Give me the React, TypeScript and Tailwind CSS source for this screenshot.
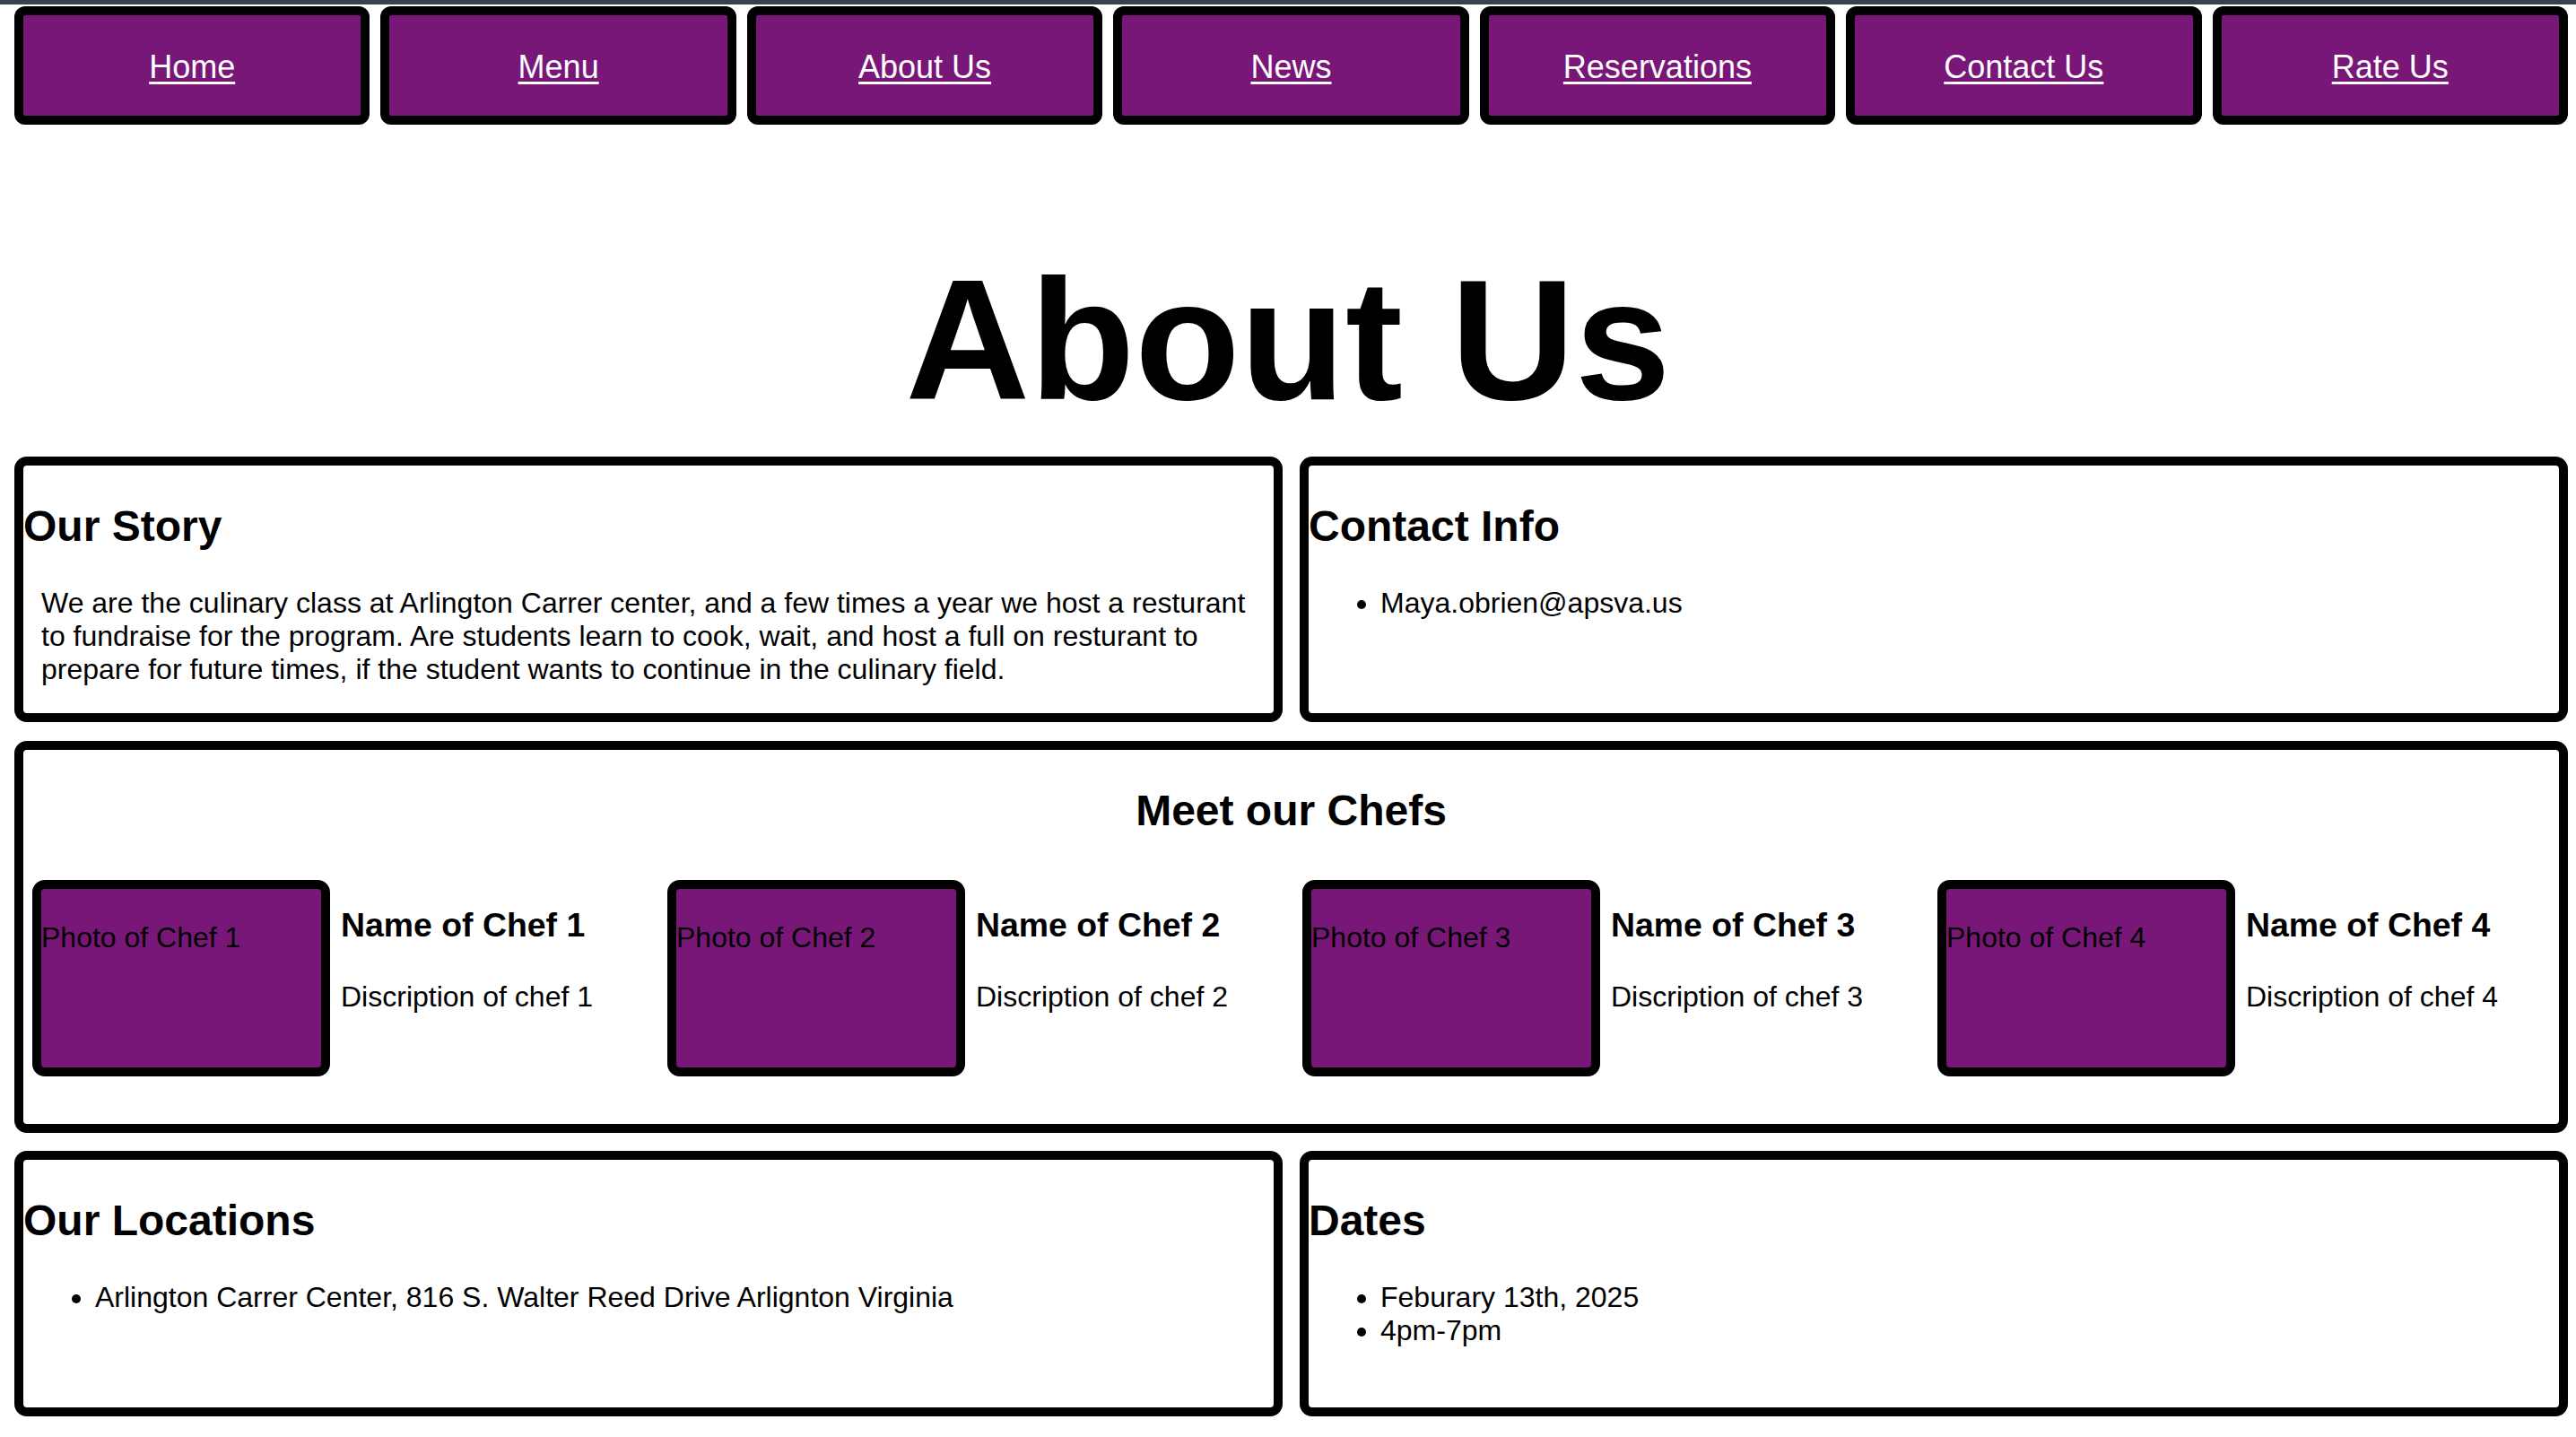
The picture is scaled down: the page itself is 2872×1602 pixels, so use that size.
const navItems = ["Home", "Menu", "About Us", "News", "Reservations", "Contact Us", "Rate Us"];

const chefs = [1, 2, 3, 4];

function Box({ title, children, className = "" }: { title: string; children: React.ReactNode; className?: string }) {
  return (
    <div className={`flex-1 border-[10px] border-black rounded-[14px] overflow-hidden ${className}`}>
      <h2 className="text-[48px] font-bold leading-[1.15] my-[40px]">{title}</h2>
      {children}
    </div>
  );
}

function ChefCard({ n }: { n: number }) {
  return (
    <div className="flex w-[708px] shrink-0 items-start">
      <div className="ml-[10px] mt-[10px] mr-[12px] w-[332px] h-[219px] shrink-0 border-[10px] border-black rounded-[14px] bg-[#781778]">
        <p className="mt-[36px] text-[32px] leading-[1.15] text-black">Photo of Chef {n}</p>
      </div>
      <div>
        <h3 className="text-[37.4px] font-bold leading-[1.15] mt-[39px] mb-[40px]">Name of Chef {n}</h3>
        <p className="text-[32px] leading-[1.15]">Discription of chef {n}</p>
      </div>
    </div>
  );
}

export default function App() {
  return (
    <div className="min-h-[1602px] bg-white text-black" style={{ fontFamily: '"Liberation Sans", Arial, Helvetica, sans-serif' }}>
      <div className="h-[5px] bg-[#394150]" />
      <nav className="mt-[2px] flex gap-[12px] pl-[16px] pr-[9px]">
        {navItems.map((item) => (
          <a
            key={item}
            href="#"
            className="flex-1 h-[132px] pt-[4px] flex items-center justify-center border-[10px] border-black rounded-[12px] bg-[#781778] text-white text-[36px] leading-[1.15] underline underline-offset-[4px] decoration-[3px]"
          >
            {item}
          </a>
        ))}
      </nav>

      <h1 className="text-center text-[192px] font-bold leading-[1.15] mt-[130px] mb-[19px]">About Us</h1>

      <div className="pl-[16px] pr-[9px]">
        <div className="flex gap-[19px] h-[296px]">
          <Box title="Our Story">
            <p className="mx-[20px] my-[32px] text-[32px] leading-[1.15]">
              We are the culinary class at Arlington Carrer center, and a few times a year we host a resturant to fundraise for the program. Are students learn to cook, wait, and host a full on resturant to prepare for future times, if the student wants to continue in the culinary field.
            </p>
          </Box>
          <Box title="Contact Info">
            <ul className="list-disc pl-[80px] my-[32px] text-[32px] leading-[1.15]">
              <li>Maya.obrien@apsva.us</li>
            </ul>
          </Box>
        </div>

        <div className="mt-[21px] h-[437px] border-[10px] border-black rounded-[14px] overflow-hidden">
          <h2 className="text-center text-[48px] font-bold leading-[1.15] my-[40px]">Meet our Chefs</h2>
          <div className="flex">
            {chefs.map((n) => (
              <ChefCard key={n} n={n} />
            ))}
          </div>
        </div>

        <div className="mt-[20px] flex gap-[19px] h-[296px]">
          <Box title="Our Locations">
            <ul className="list-disc pl-[80px] my-[32px] text-[32px] leading-[1.15]">
              <li>Arlington Carrer Center, 816 S. Walter Reed Drive Arlignton Virginia</li>
            </ul>
          </Box>
          <Box title="Dates">
            <ul className="list-disc pl-[80px] my-[32px] text-[32px] leading-[1.15]">
              <li>Feburary 13th, 2025</li>
              <li>4pm-7pm</li>
            </ul>
          </Box>
        </div>
      </div>
    </div>
  );
}
